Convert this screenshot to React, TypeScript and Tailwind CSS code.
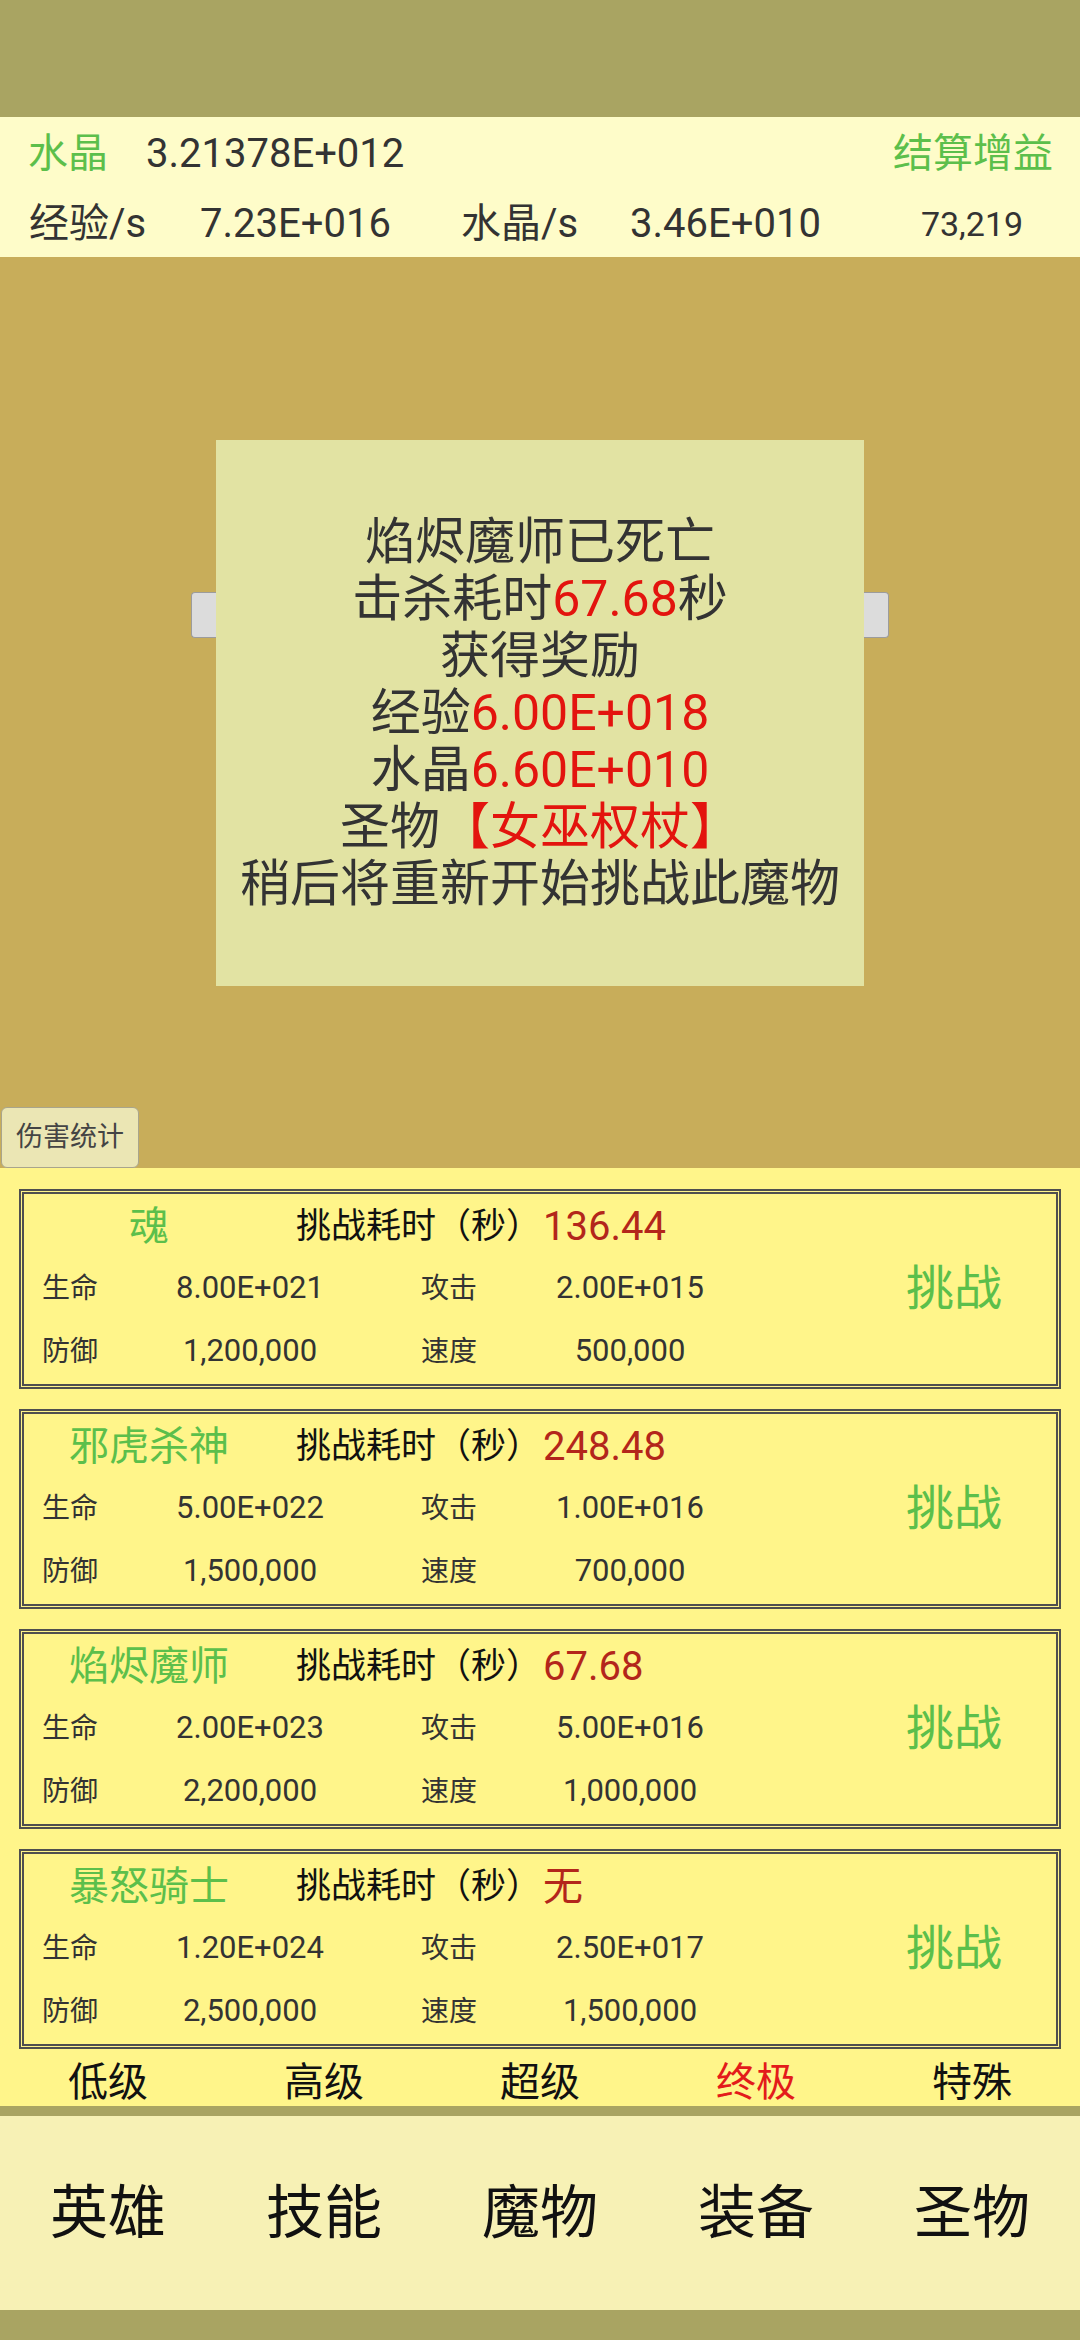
import React from "react";

const monsters = [
  { name: "魂", time: "136.44", hp: "8.00E+021", atk: "2.00E+015", def: "1,200,000", spd: "500,000" },
  { name: "邪虎杀神", time: "248.48", hp: "5.00E+022", atk: "1.00E+016", def: "1,500,000", spd: "700,000" },
  { name: "焰烬魔师", time: "67.68", hp: "2.00E+023", atk: "5.00E+016", def: "2,200,000", spd: "1,000,000" },
  { name: "暴怒骑士", time: "无", hp: "1.20E+024", atk: "2.50E+017", def: "2,500,000", spd: "1,500,000" },
];

const tiers = ["低级", "高级", "超级", "终极", "特殊"];
const navItems = ["英雄", "技能", "魔物", "装备", "圣物"];

function Header() {
  return (
    <div className="h-[140px] bg-[#fefcc9] text-[#333]">
      <div className="flex h-[74px] items-center pl-[28px] pr-[27px] text-[40px]">
        <span className="text-[#5cbf4b]">水晶</span>
        <span className="ml-[38px]">3.21378E+012</span>
        <span className="ml-auto text-[#5cbf4b]">结算增益</span>
      </div>
      <div className="flex h-[66px] items-center pl-[29px] text-[40px]">
        <span className="w-[171px]">经验/s</span>
        <span className="w-[261px]">7.23E+016</span>
        <span className="w-[169px]">水晶/s</span>
        <span className="w-[250px]">3.46E+010</span>
        <span className="w-[184px] text-center text-[34px]">73,219</span>
      </div>
    </div>
  );
}

function Battle() {
  return (
    <div className="flex h-[911px] flex-col bg-[#c8ad5a]">
      <div className="mt-[183px] flex items-start justify-center">
        <div className="mt-[152px] h-[46px] w-[25px] rounded-l-[4px] border border-r-0 border-[#9c9c9c] bg-[#dcdcdc]" />
        <div className="flex h-[546px] w-[648px] flex-col items-center justify-center bg-[#e2e3a3] text-[50px] leading-[57px] text-[#333]">
          <p>焰烬魔师已死亡</p>
          <p>
            击杀耗时<span className="text-[#e3140e]">67.68</span>秒
          </p>
          <p>获得奖励</p>
          <p>
            经验<span className="text-[#e3140e]">6.00E+018</span>
          </p>
          <p>
            水晶<span className="text-[#e3140e]">6.60E+010</span>
          </p>
          <p>
            圣物<span className="text-[#e3140e]">【女巫权杖】</span>
          </p>
          <p>稍后将重新开始挑战此魔物</p>
        </div>
        <div className="mt-[152px] h-[46px] w-[25px] rounded-r-[4px] border border-l-0 border-[#9c9c9c] bg-[#dcdcdc]" />
      </div>
      <button className="mt-auto ml-[1px] flex h-[61px] w-[138px] items-center justify-center rounded-[6px] border border-[#a9a58c] bg-[#ebe6b4] text-[27px] text-[#444]">
        伤害统计
      </button>
    </div>
  );
}

function MonsterCard({ m }: { m: (typeof monsters)[number] }) {
  return (
    <div className="h-[200px] border-[5px] border-double border-[#4f4f4f] pt-[3px] pl-[18px]">
      <div className="flex h-[60px] items-center">
        <span className="w-[214px] text-center text-[40px] text-[#5cbf4b]">{m.name}</span>
        <span className="ml-[40px] text-[35px] text-[#111]">挑战耗时（秒）</span>
        <span className="ml-[2px] text-[40px] text-[#b3261b]">{m.time}</span>
      </div>
      <div className="flex h-[63px] items-center text-[#333]">
        <span className="w-[80px] text-[28px]">生命</span>
        <span className="w-[256px] text-center text-[31px]">{m.hp}</span>
        <span className="ml-[43px] w-[80px] text-[28px]">攻击</span>
        <span className="w-[258px] text-center text-[31px]">{m.atk}</span>
        <span className="ml-auto mr-[4px] w-[196px] text-center text-[48px] text-[#5cbf4b]">挑战</span>
      </div>
      <div className="flex h-[63px] items-center text-[#333]">
        <span className="w-[80px] text-[28px]">防御</span>
        <span className="w-[256px] text-center text-[31px]">{m.def}</span>
        <span className="ml-[43px] w-[80px] text-[28px]">速度</span>
        <span className="w-[258px] text-center text-[31px]">{m.spd}</span>
      </div>
    </div>
  );
}

function MonsterList() {
  return (
    <div className="h-[938px] bg-[#fff58a] px-[19px] pt-[21px]">
      <div className="flex flex-col gap-[20px]">
        {monsters.map((m) => (
          <MonsterCard key={m.name} m={m} />
        ))}
      </div>
      <div className="-mx-[19px] grid h-[57px] grid-cols-5 items-center pt-[4px] text-[40px] text-[#111]">
        {tiers.map((t) => (
          <span key={t} className={t === "终极" ? "text-center text-[#e31b1b]" : "text-center"}>
            {t}
          </span>
        ))}
      </div>
    </div>
  );
}

function Nav() {
  return (
    <div className="grid h-[194px] grid-cols-5 items-center bg-[#f7f1b5] text-[58px] text-[#111]">
      {navItems.map((n) => (
        <span key={n} className="text-center">
          {n}
        </span>
      ))}
    </div>
  );
}

export default function App() {
  return (
    <div className="flex h-[2340px] w-[1080px] flex-col bg-[#a9a462] font-['Roboto','Noto_Sans_CJK_SC',sans-serif]">
      <div className="h-[117px] shrink-0" />
      <Header />
      <Battle />
      <MonsterList />
      <div className="h-[10px] shrink-0" />
      <Nav />
      <div className="flex-1" />
    </div>
  );
}
